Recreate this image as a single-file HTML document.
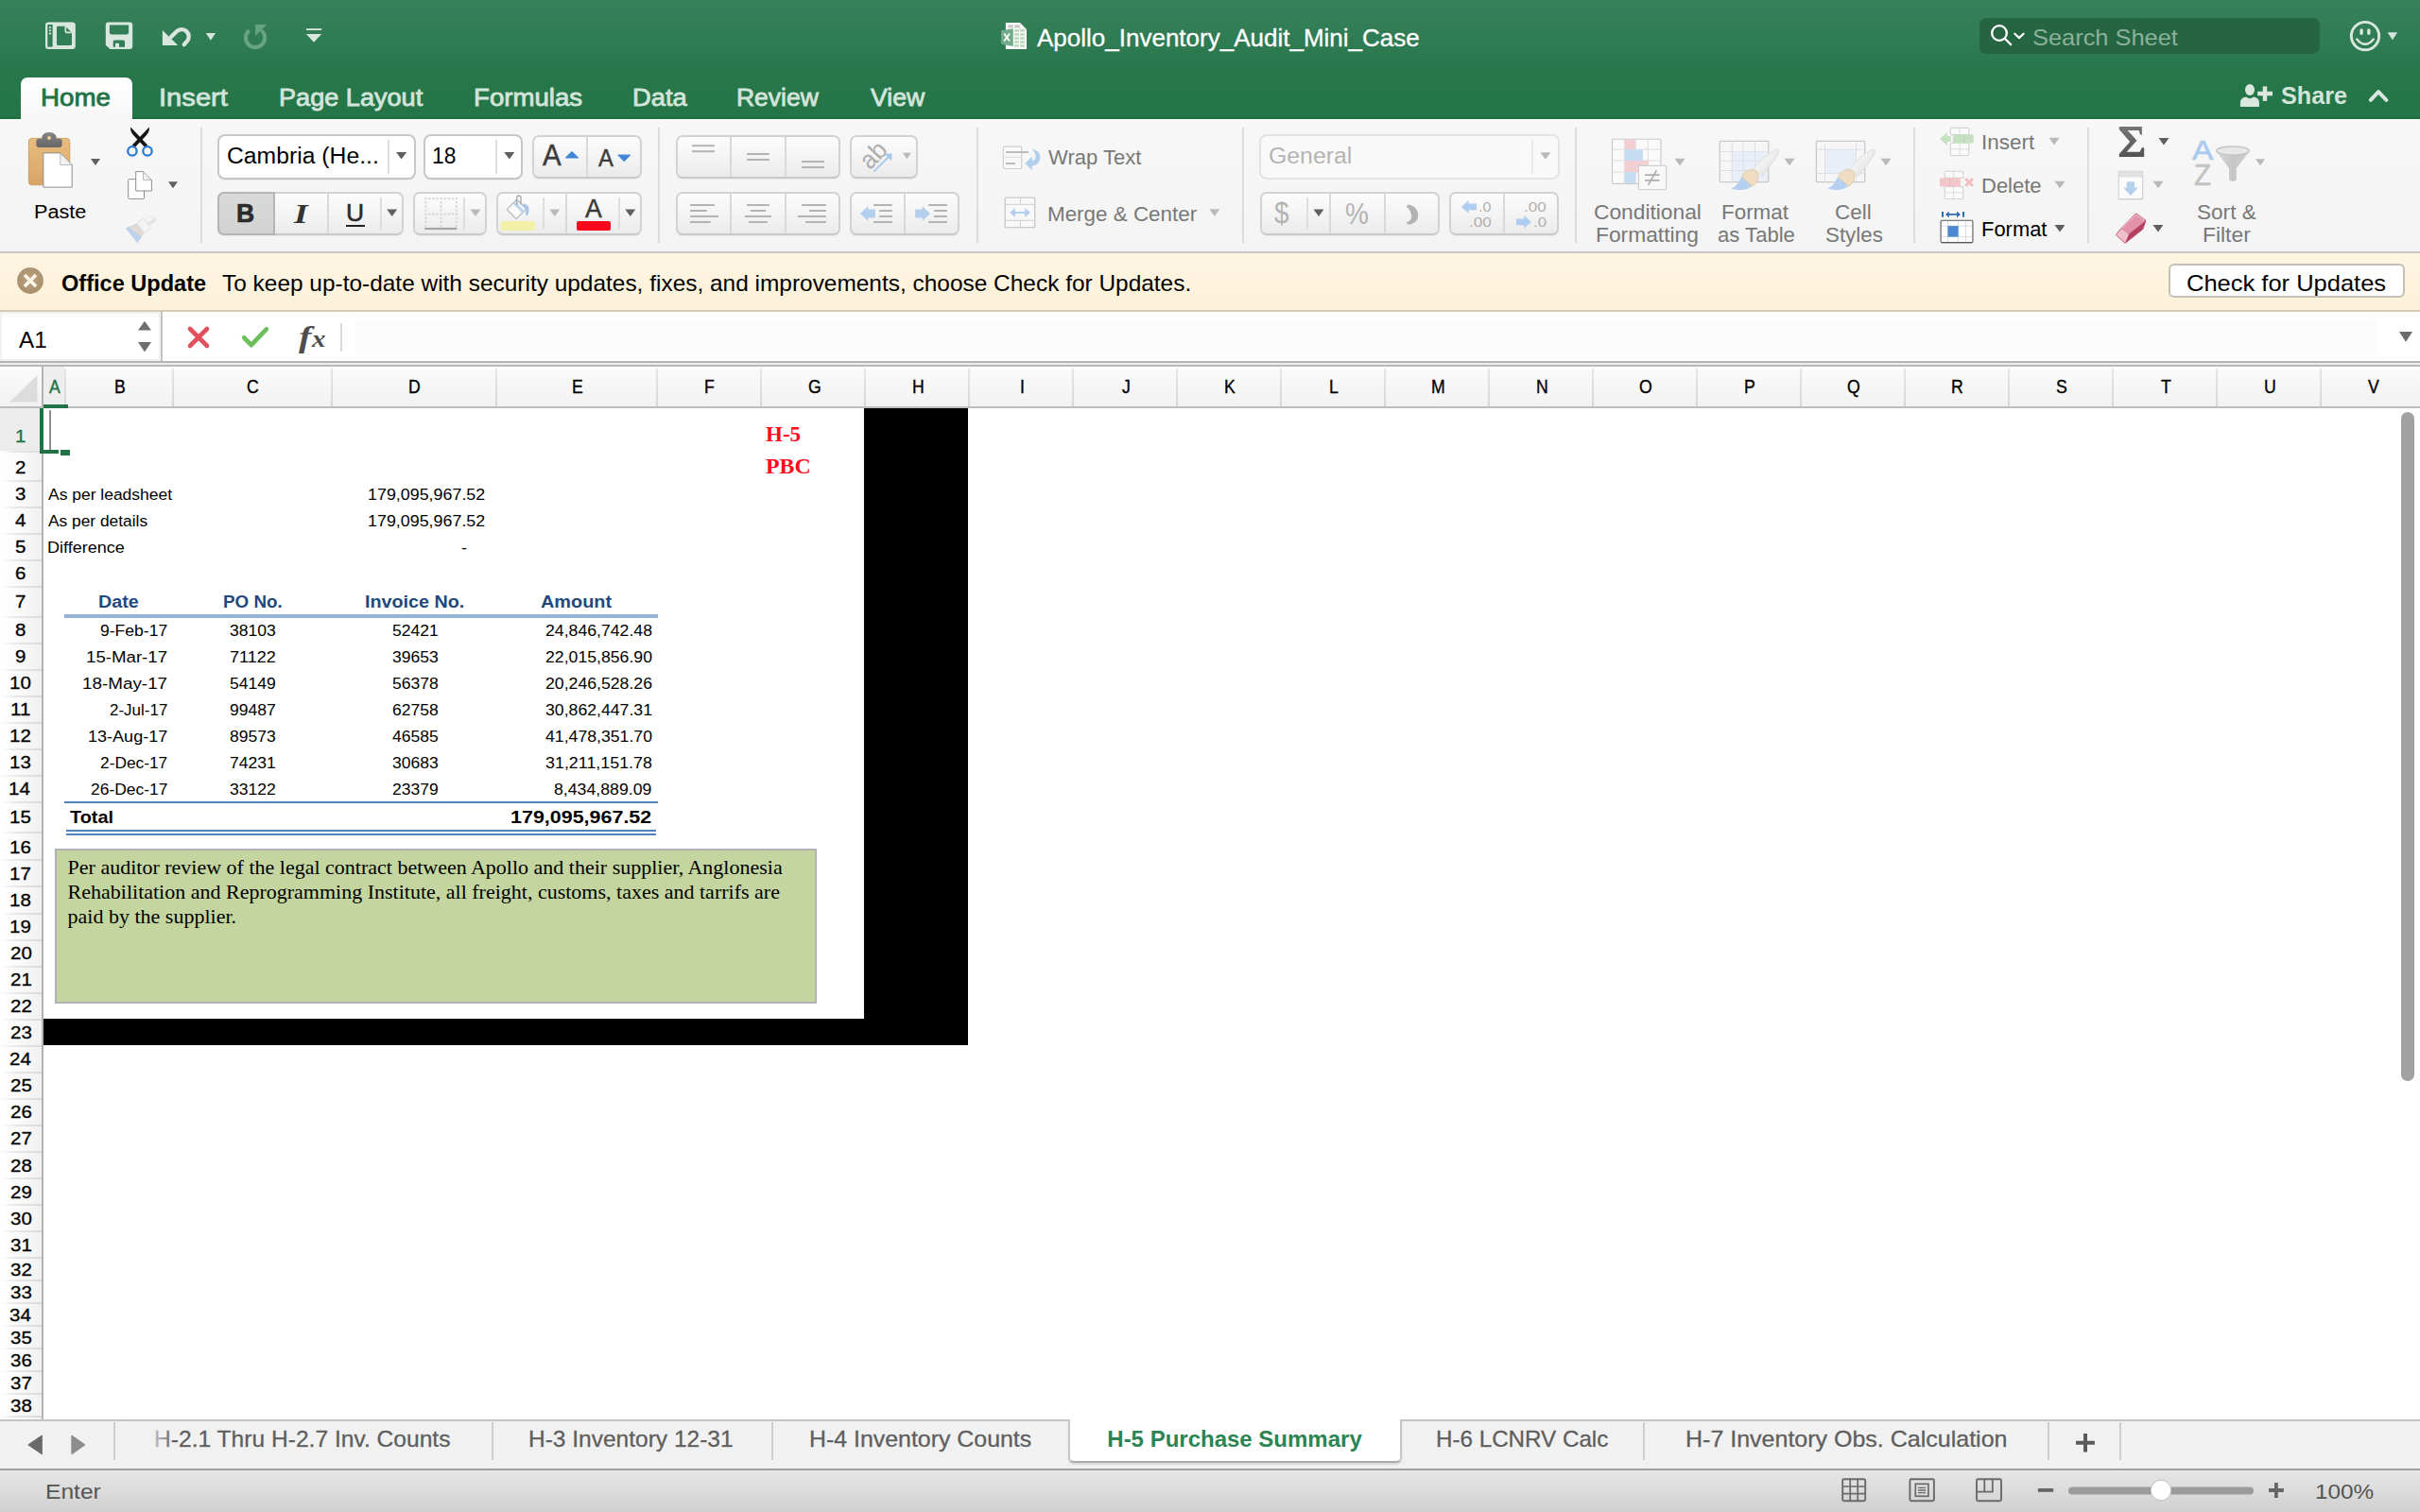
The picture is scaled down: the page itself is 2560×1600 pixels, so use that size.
<!DOCTYPE html>
<html><head><meta charset="utf-8"><title>Apollo_Inventory_Audit_Mini_Case</title>
<style>
html,body{margin:0;padding:0;width:2560px;height:1600px;overflow:hidden;background:#fff;font-family:"Liberation Sans",sans-serif;}
#app{position:relative;width:2560px;height:1600px;overflow:hidden;}
#app div{position:absolute;box-sizing:border-box;}
.t{position:absolute;white-space:pre;transform-origin:0 0;}
.ov{position:absolute;left:0;top:0;pointer-events:none;}
</style></head><body><div id="app">
<div style="left:0px;top:0px;width:2560px;height:126px;background:linear-gradient(#39815a 0px,#35805a 10px,#2f7b53 45px,#267649 85px,#237548 126px);"></div>
<div style="left:0px;top:124px;width:2560px;height:2px;background:linear-gradient(#217044,#1c6a3f);"></div>
<div style="left:22px;top:82px;width:118px;height:46px;background:linear-gradient(#ffffff,#f6f6f6);border-radius:7px 7px 0 0;"></div>
<div style="left:2094px;top:19px;width:360px;height:38px;background:#256542;border-radius:7px;"></div>
<div style="left:0px;top:126px;width:2560px;height:140px;background:linear-gradient(#f7f7f7,#f4f4f4);"></div>
<div style="left:0px;top:266px;width:2560px;height:2px;background:#c8c8c8;"></div>
<div style="left:22px;top:120px;width:118px;height:8px;background:#f6f6f6;"></div>
<div style="left:0px;top:268px;width:2560px;height:60px;background:linear-gradient(#fef5e1,#fcf1da);"></div>
<div style="left:0px;top:328px;width:2560px;height:2px;background:#d6ccb4;"></div>
<div style="left:0px;top:330px;width:2560px;height:52px;background:#fff;"></div>
<div style="left:376px;top:338px;width:2140px;height:38px;background:#fcfcfc;"></div>
<div style="left:0px;top:330px;width:170px;height:52px;background:#f1f1f1;"></div>
<div style="left:2px;top:332px;width:166px;height:48px;background:#fff;"></div>
<div style="left:170px;top:330px;width:2px;height:52px;background:#c2c2c2;"></div>
<div style="left:0px;top:382px;width:2560px;height:2px;background:#b4b4b4;"></div>
<div style="left:0px;top:384px;width:2560px;height:2px;background:#ececec;"></div>
<div style="left:0px;top:386px;width:2560px;height:2px;background:#b8b8b8;"></div>
<div style="left:0px;top:388px;width:2560px;height:42px;background:linear-gradient(#fbfbfb,#f2f2f2);"></div>
<div style="left:0px;top:430px;width:2560px;height:2px;background:#bcbcbc;"></div>
<div style="left:0px;top:432px;width:44px;height:1070px;background:linear-gradient(90deg,#ffffff 0%,#fbfbfb 40%,#f1f1f1 100%);"></div>
<div style="left:44px;top:388px;width:2px;height:1114px;background:#b3b3b3;"></div>
<div style="left:0px;top:1502px;width:2560px;height:2px;background:#c4c4c4;"></div>
<div style="left:0px;top:1504px;width:2560px;height:50px;background:#f1f1f1;"></div>
<div style="left:0px;top:1554px;width:2560px;height:2px;background:#a0a0a0;"></div>
<div style="left:0px;top:1556px;width:2560px;height:44px;background:linear-gradient(#e6e6e6,#d9d9d9 60%,#d0d0d0);"></div>
<div style="left:46px;top:388px;width:22px;height:42px;background:#eeeeee;"></div>
<div style="left:68px;top:390px;width:2px;height:40px;background:linear-gradient(#e6e6e6,#d6d6d6);"></div>
<div style="left:182px;top:390px;width:2px;height:40px;background:linear-gradient(#e6e6e6,#d6d6d6);"></div>
<div style="left:350px;top:390px;width:2px;height:40px;background:linear-gradient(#e6e6e6,#d6d6d6);"></div>
<div style="left:524px;top:390px;width:2px;height:40px;background:linear-gradient(#e6e6e6,#d6d6d6);"></div>
<div style="left:694px;top:390px;width:2px;height:40px;background:linear-gradient(#e6e6e6,#d6d6d6);"></div>
<div style="left:804px;top:390px;width:2px;height:40px;background:linear-gradient(#e6e6e6,#d6d6d6);"></div>
<div style="left:914px;top:390px;width:2px;height:40px;background:linear-gradient(#e6e6e6,#d6d6d6);"></div>
<div style="left:1024px;top:390px;width:2px;height:40px;background:linear-gradient(#e6e6e6,#d6d6d6);"></div>
<div style="left:1134px;top:390px;width:2px;height:40px;background:linear-gradient(#e6e6e6,#d6d6d6);"></div>
<div style="left:1244px;top:390px;width:2px;height:40px;background:linear-gradient(#e6e6e6,#d6d6d6);"></div>
<div style="left:1354px;top:390px;width:2px;height:40px;background:linear-gradient(#e6e6e6,#d6d6d6);"></div>
<div style="left:1464px;top:390px;width:2px;height:40px;background:linear-gradient(#e6e6e6,#d6d6d6);"></div>
<div style="left:1574px;top:390px;width:2px;height:40px;background:linear-gradient(#e6e6e6,#d6d6d6);"></div>
<div style="left:1684px;top:390px;width:2px;height:40px;background:linear-gradient(#e6e6e6,#d6d6d6);"></div>
<div style="left:1794px;top:390px;width:2px;height:40px;background:linear-gradient(#e6e6e6,#d6d6d6);"></div>
<div style="left:1904px;top:390px;width:2px;height:40px;background:linear-gradient(#e6e6e6,#d6d6d6);"></div>
<div style="left:2014px;top:390px;width:2px;height:40px;background:linear-gradient(#e6e6e6,#d6d6d6);"></div>
<div style="left:2124px;top:390px;width:2px;height:40px;background:linear-gradient(#e6e6e6,#d6d6d6);"></div>
<div style="left:2234px;top:390px;width:2px;height:40px;background:linear-gradient(#e6e6e6,#d6d6d6);"></div>
<div style="left:2344px;top:390px;width:2px;height:40px;background:linear-gradient(#e6e6e6,#d6d6d6);"></div>
<div style="left:2454px;top:390px;width:2px;height:40px;background:linear-gradient(#e6e6e6,#d6d6d6);"></div>
<span class="t" style="left:52.00px;top:397.21px;font:normal 400 19.6px/24px 'Liberation Sans';color:#217346;transform:scaleX(0.9000);-webkit-text-stroke:0.35px;">A</span>
<span class="t" style="left:120.90px;top:397.21px;font:normal 400 19.6px/24px 'Liberation Sans';color:#000;transform:scaleX(0.9000);-webkit-text-stroke:0.35px;">B</span>
<span class="t" style="left:261.45px;top:397.21px;font:normal 400 19.6px/24px 'Liberation Sans';color:#000;transform:scaleX(0.9000);-webkit-text-stroke:0.35px;">C</span>
<span class="t" style="left:432.45px;top:397.21px;font:normal 400 19.6px/24px 'Liberation Sans';color:#000;transform:scaleX(0.9000);-webkit-text-stroke:0.35px;">D</span>
<span class="t" style="left:604.90px;top:397.21px;font:normal 400 19.6px/24px 'Liberation Sans';color:#000;transform:scaleX(0.9000);-webkit-text-stroke:0.35px;">E</span>
<span class="t" style="left:745.35px;top:397.21px;font:normal 400 19.6px/24px 'Liberation Sans';color:#000;transform:scaleX(0.9000);-webkit-text-stroke:0.35px;">F</span>
<span class="t" style="left:854.90px;top:397.21px;font:normal 400 19.6px/24px 'Liberation Sans';color:#000;transform:scaleX(0.9000);-webkit-text-stroke:0.35px;">G</span>
<span class="t" style="left:964.90px;top:397.21px;font:normal 400 19.6px/24px 'Liberation Sans';color:#000;transform:scaleX(0.9000);-webkit-text-stroke:0.35px;">H</span>
<span class="t" style="left:1078.95px;top:397.21px;font:normal 400 19.6px/24px 'Liberation Sans';color:#000;transform:scaleX(0.9000);-webkit-text-stroke:0.35px;">I</span>
<span class="t" style="left:1187.15px;top:397.21px;font:normal 400 19.6px/24px 'Liberation Sans';color:#000;transform:scaleX(0.9000);-webkit-text-stroke:0.35px;">J</span>
<span class="t" style="left:1294.90px;top:397.21px;font:normal 400 19.6px/24px 'Liberation Sans';color:#000;transform:scaleX(0.9000);-webkit-text-stroke:0.35px;">K</span>
<span class="t" style="left:1405.80px;top:397.21px;font:normal 400 19.6px/24px 'Liberation Sans';color:#000;transform:scaleX(0.9000);-webkit-text-stroke:0.35px;">L</span>
<span class="t" style="left:1514.00px;top:397.21px;font:normal 400 19.6px/24px 'Liberation Sans';color:#000;transform:scaleX(0.9000);-webkit-text-stroke:0.35px;">M</span>
<span class="t" style="left:1624.90px;top:397.21px;font:normal 400 19.6px/24px 'Liberation Sans';color:#000;transform:scaleX(0.9000);-webkit-text-stroke:0.35px;">N</span>
<span class="t" style="left:1734.45px;top:397.21px;font:normal 400 19.6px/24px 'Liberation Sans';color:#000;transform:scaleX(0.9000);-webkit-text-stroke:0.35px;">O</span>
<span class="t" style="left:1844.90px;top:397.21px;font:normal 400 19.6px/24px 'Liberation Sans';color:#000;transform:scaleX(0.9000);-webkit-text-stroke:0.35px;">P</span>
<span class="t" style="left:1954.45px;top:397.21px;font:normal 400 19.6px/24px 'Liberation Sans';color:#000;transform:scaleX(0.9000);-webkit-text-stroke:0.35px;">Q</span>
<span class="t" style="left:2064.45px;top:397.21px;font:normal 400 19.6px/24px 'Liberation Sans';color:#000;transform:scaleX(0.9000);-webkit-text-stroke:0.35px;">R</span>
<span class="t" style="left:2175.35px;top:397.21px;font:normal 400 19.6px/24px 'Liberation Sans';color:#000;transform:scaleX(0.9000);-webkit-text-stroke:0.35px;">S</span>
<span class="t" style="left:2285.80px;top:397.21px;font:normal 400 19.6px/24px 'Liberation Sans';color:#000;transform:scaleX(0.9000);-webkit-text-stroke:0.35px;">T</span>
<span class="t" style="left:2394.90px;top:397.21px;font:normal 400 19.6px/24px 'Liberation Sans';color:#000;transform:scaleX(0.9000);-webkit-text-stroke:0.35px;">U</span>
<span class="t" style="left:2505.35px;top:397.21px;font:normal 400 19.6px/24px 'Liberation Sans';color:#000;transform:scaleX(0.9000);-webkit-text-stroke:0.35px;">V</span>
<div style="left:0px;top:432px;width:44px;height:45px;background:#ececec;"></div>
<div style="left:0px;top:477px;width:44px;height:2px;background:linear-gradient(90deg,#ffffff 0%,#e9e9e9 35%,#dadada 100%);"></div>
<div style="left:0px;top:508px;width:44px;height:2px;background:linear-gradient(90deg,#ffffff 0%,#e9e9e9 35%,#dadada 100%);"></div>
<div style="left:0px;top:536px;width:44px;height:2px;background:linear-gradient(90deg,#ffffff 0%,#e9e9e9 35%,#dadada 100%);"></div>
<div style="left:0px;top:564px;width:44px;height:2px;background:linear-gradient(90deg,#ffffff 0%,#e9e9e9 35%,#dadada 100%);"></div>
<div style="left:0px;top:592px;width:44px;height:2px;background:linear-gradient(90deg,#ffffff 0%,#e9e9e9 35%,#dadada 100%);"></div>
<div style="left:0px;top:620px;width:44px;height:2px;background:linear-gradient(90deg,#ffffff 0%,#e9e9e9 35%,#dadada 100%);"></div>
<div style="left:0px;top:652px;width:44px;height:2px;background:linear-gradient(90deg,#ffffff 0%,#e9e9e9 35%,#dadada 100%);"></div>
<div style="left:0px;top:680px;width:44px;height:2px;background:linear-gradient(90deg,#ffffff 0%,#e9e9e9 35%,#dadada 100%);"></div>
<div style="left:0px;top:708px;width:44px;height:2px;background:linear-gradient(90deg,#ffffff 0%,#e9e9e9 35%,#dadada 100%);"></div>
<div style="left:0px;top:736px;width:44px;height:2px;background:linear-gradient(90deg,#ffffff 0%,#e9e9e9 35%,#dadada 100%);"></div>
<div style="left:0px;top:764px;width:44px;height:2px;background:linear-gradient(90deg,#ffffff 0%,#e9e9e9 35%,#dadada 100%);"></div>
<div style="left:0px;top:792px;width:44px;height:2px;background:linear-gradient(90deg,#ffffff 0%,#e9e9e9 35%,#dadada 100%);"></div>
<div style="left:0px;top:820px;width:44px;height:2px;background:linear-gradient(90deg,#ffffff 0%,#e9e9e9 35%,#dadada 100%);"></div>
<div style="left:0px;top:848px;width:44px;height:2px;background:linear-gradient(90deg,#ffffff 0%,#e9e9e9 35%,#dadada 100%);"></div>
<div style="left:0px;top:880px;width:44px;height:2px;background:linear-gradient(90deg,#ffffff 0%,#e9e9e9 35%,#dadada 100%);"></div>
<div style="left:0px;top:909px;width:44px;height:2px;background:linear-gradient(90deg,#ffffff 0%,#e9e9e9 35%,#dadada 100%);"></div>
<div style="left:0px;top:937px;width:44px;height:2px;background:linear-gradient(90deg,#ffffff 0%,#e9e9e9 35%,#dadada 100%);"></div>
<div style="left:0px;top:966px;width:44px;height:2px;background:linear-gradient(90deg,#ffffff 0%,#e9e9e9 35%,#dadada 100%);"></div>
<div style="left:0px;top:994px;width:44px;height:2px;background:linear-gradient(90deg,#ffffff 0%,#e9e9e9 35%,#dadada 100%);"></div>
<div style="left:0px;top:1022px;width:44px;height:2px;background:linear-gradient(90deg,#ffffff 0%,#e9e9e9 35%,#dadada 100%);"></div>
<div style="left:0px;top:1050px;width:44px;height:2px;background:linear-gradient(90deg,#ffffff 0%,#e9e9e9 35%,#dadada 100%);"></div>
<div style="left:0px;top:1078px;width:44px;height:2px;background:linear-gradient(90deg,#ffffff 0%,#e9e9e9 35%,#dadada 100%);"></div>
<div style="left:0px;top:1106px;width:44px;height:2px;background:linear-gradient(90deg,#ffffff 0%,#e9e9e9 35%,#dadada 100%);"></div>
<div style="left:0px;top:1134px;width:44px;height:2px;background:linear-gradient(90deg,#ffffff 0%,#e9e9e9 35%,#dadada 100%);"></div>
<div style="left:0px;top:1162px;width:44px;height:2px;background:linear-gradient(90deg,#ffffff 0%,#e9e9e9 35%,#dadada 100%);"></div>
<div style="left:0px;top:1190px;width:44px;height:2px;background:linear-gradient(90deg,#ffffff 0%,#e9e9e9 35%,#dadada 100%);"></div>
<div style="left:0px;top:1218px;width:44px;height:2px;background:linear-gradient(90deg,#ffffff 0%,#e9e9e9 35%,#dadada 100%);"></div>
<div style="left:0px;top:1246px;width:44px;height:2px;background:linear-gradient(90deg,#ffffff 0%,#e9e9e9 35%,#dadada 100%);"></div>
<div style="left:0px;top:1274px;width:44px;height:2px;background:linear-gradient(90deg,#ffffff 0%,#e9e9e9 35%,#dadada 100%);"></div>
<div style="left:0px;top:1302px;width:44px;height:2px;background:linear-gradient(90deg,#ffffff 0%,#e9e9e9 35%,#dadada 100%);"></div>
<div style="left:0px;top:1330px;width:44px;height:2px;background:linear-gradient(90deg,#ffffff 0%,#e9e9e9 35%,#dadada 100%);"></div>
<div style="left:0px;top:1354px;width:44px;height:2px;background:linear-gradient(90deg,#ffffff 0%,#e9e9e9 35%,#dadada 100%);"></div>
<div style="left:0px;top:1378px;width:44px;height:2px;background:linear-gradient(90deg,#ffffff 0%,#e9e9e9 35%,#dadada 100%);"></div>
<div style="left:0px;top:1402px;width:44px;height:2px;background:linear-gradient(90deg,#ffffff 0%,#e9e9e9 35%,#dadada 100%);"></div>
<div style="left:0px;top:1426px;width:44px;height:2px;background:linear-gradient(90deg,#ffffff 0%,#e9e9e9 35%,#dadada 100%);"></div>
<div style="left:0px;top:1450px;width:44px;height:2px;background:linear-gradient(90deg,#ffffff 0%,#e9e9e9 35%,#dadada 100%);"></div>
<div style="left:0px;top:1474px;width:44px;height:2px;background:linear-gradient(90deg,#ffffff 0%,#e9e9e9 35%,#dadada 100%);"></div>
<div style="left:0px;top:1498px;width:44px;height:2px;background:linear-gradient(90deg,#ffffff 0%,#e9e9e9 35%,#dadada 100%);"></div>
<span class="t" style="left:15.71px;top:449.55px;font:normal 400 19.2px/23px 'Liberation Sans';color:#217346;transform:scaleX(1.0700);-webkit-text-stroke:0.3px;">1</span>
<span class="t" style="left:16.25px;top:483.25px;font:normal 400 19.2px/23px 'Liberation Sans';color:#000;transform:scaleX(1.0700);-webkit-text-stroke:0.3px;">2</span>
<span class="t" style="left:16.25px;top:511.25px;font:normal 400 19.2px/23px 'Liberation Sans';color:#000;transform:scaleX(1.0700);-webkit-text-stroke:0.3px;">3</span>
<span class="t" style="left:15.71px;top:539.25px;font:normal 400 19.2px/23px 'Liberation Sans';color:#000;transform:scaleX(1.0700);-webkit-text-stroke:0.3px;">4</span>
<span class="t" style="left:16.25px;top:567.25px;font:normal 400 19.2px/23px 'Liberation Sans';color:#000;transform:scaleX(1.0700);-webkit-text-stroke:0.3px;">5</span>
<span class="t" style="left:16.25px;top:595.25px;font:normal 400 19.2px/23px 'Liberation Sans';color:#000;transform:scaleX(1.0700);-webkit-text-stroke:0.3px;">6</span>
<span class="t" style="left:16.25px;top:625.05px;font:normal 400 19.2px/23px 'Liberation Sans';color:#000;transform:scaleX(1.0700);-webkit-text-stroke:0.3px;">7</span>
<span class="t" style="left:16.25px;top:655.25px;font:normal 400 19.2px/23px 'Liberation Sans';color:#000;transform:scaleX(1.0700);-webkit-text-stroke:0.3px;">8</span>
<span class="t" style="left:16.25px;top:683.25px;font:normal 400 19.2px/23px 'Liberation Sans';color:#000;transform:scaleX(1.0700);-webkit-text-stroke:0.3px;">9</span>
<span class="t" style="left:10.01px;top:711.25px;font:normal 400 19.2px/23px 'Liberation Sans';color:#000;transform:scaleX(1.0700);-webkit-text-stroke:0.3px;">10</span>
<span class="t" style="left:10.77px;top:739.25px;font:normal 400 19.2px/23px 'Liberation Sans';color:#000;transform:scaleX(1.0700);-webkit-text-stroke:0.3px;">11</span>
<span class="t" style="left:10.01px;top:767.25px;font:normal 400 19.2px/23px 'Liberation Sans';color:#000;transform:scaleX(1.0700);-webkit-text-stroke:0.3px;">12</span>
<span class="t" style="left:10.01px;top:795.25px;font:normal 400 19.2px/23px 'Liberation Sans';color:#000;transform:scaleX(1.0700);-webkit-text-stroke:0.3px;">13</span>
<span class="t" style="left:9.47px;top:823.25px;font:normal 400 19.2px/23px 'Liberation Sans';color:#000;transform:scaleX(1.0700);-webkit-text-stroke:0.3px;">14</span>
<span class="t" style="left:10.01px;top:853.45px;font:normal 400 19.2px/23px 'Liberation Sans';color:#000;transform:scaleX(1.0700);-webkit-text-stroke:0.3px;">15</span>
<span class="t" style="left:10.01px;top:885.25px;font:normal 400 19.2px/23px 'Liberation Sans';color:#000;transform:scaleX(1.0700);-webkit-text-stroke:0.3px;">16</span>
<span class="t" style="left:10.01px;top:912.95px;font:normal 400 19.2px/23px 'Liberation Sans';color:#000;transform:scaleX(1.0700);-webkit-text-stroke:0.3px;">17</span>
<span class="t" style="left:10.01px;top:941.05px;font:normal 400 19.2px/23px 'Liberation Sans';color:#000;transform:scaleX(1.0700);-webkit-text-stroke:0.3px;">18</span>
<span class="t" style="left:10.01px;top:969.15px;font:normal 400 19.2px/23px 'Liberation Sans';color:#000;transform:scaleX(1.0700);-webkit-text-stroke:0.3px;">19</span>
<span class="t" style="left:10.54px;top:997.25px;font:normal 400 19.2px/23px 'Liberation Sans';color:#000;transform:scaleX(1.0700);-webkit-text-stroke:0.3px;">20</span>
<span class="t" style="left:10.54px;top:1025.45px;font:normal 400 19.2px/23px 'Liberation Sans';color:#000;transform:scaleX(1.0700);-webkit-text-stroke:0.3px;">21</span>
<span class="t" style="left:10.54px;top:1053.05px;font:normal 400 19.2px/23px 'Liberation Sans';color:#000;transform:scaleX(1.0700);-webkit-text-stroke:0.3px;">22</span>
<span class="t" style="left:10.54px;top:1081.05px;font:normal 400 19.2px/23px 'Liberation Sans';color:#000;transform:scaleX(1.0700);-webkit-text-stroke:0.3px;">23</span>
<span class="t" style="left:10.01px;top:1109.15px;font:normal 400 19.2px/23px 'Liberation Sans';color:#000;transform:scaleX(1.0700);-webkit-text-stroke:0.3px;">24</span>
<span class="t" style="left:10.54px;top:1137.25px;font:normal 400 19.2px/23px 'Liberation Sans';color:#000;transform:scaleX(1.0700);-webkit-text-stroke:0.3px;">25</span>
<span class="t" style="left:10.54px;top:1165.35px;font:normal 400 19.2px/23px 'Liberation Sans';color:#000;transform:scaleX(1.0700);-webkit-text-stroke:0.3px;">26</span>
<span class="t" style="left:10.54px;top:1193.45px;font:normal 400 19.2px/23px 'Liberation Sans';color:#000;transform:scaleX(1.0700);-webkit-text-stroke:0.3px;">27</span>
<span class="t" style="left:10.54px;top:1221.55px;font:normal 400 19.2px/23px 'Liberation Sans';color:#000;transform:scaleX(1.0700);-webkit-text-stroke:0.3px;">28</span>
<span class="t" style="left:10.54px;top:1249.65px;font:normal 400 19.2px/23px 'Liberation Sans';color:#000;transform:scaleX(1.0700);-webkit-text-stroke:0.3px;">29</span>
<span class="t" style="left:10.54px;top:1277.75px;font:normal 400 19.2px/23px 'Liberation Sans';color:#000;transform:scaleX(1.0700);-webkit-text-stroke:0.3px;">30</span>
<span class="t" style="left:10.54px;top:1305.85px;font:normal 400 19.2px/23px 'Liberation Sans';color:#000;transform:scaleX(1.0700);-webkit-text-stroke:0.3px;">31</span>
<span class="t" style="left:10.54px;top:1331.55px;font:normal 400 19.2px/23px 'Liberation Sans';color:#000;transform:scaleX(1.0700);-webkit-text-stroke:0.3px;">32</span>
<span class="t" style="left:10.54px;top:1355.55px;font:normal 400 19.2px/23px 'Liberation Sans';color:#000;transform:scaleX(1.0700);-webkit-text-stroke:0.3px;">33</span>
<span class="t" style="left:10.01px;top:1379.55px;font:normal 400 19.2px/23px 'Liberation Sans';color:#000;transform:scaleX(1.0700);-webkit-text-stroke:0.3px;">34</span>
<span class="t" style="left:10.54px;top:1403.55px;font:normal 400 19.2px/23px 'Liberation Sans';color:#000;transform:scaleX(1.0700);-webkit-text-stroke:0.3px;">35</span>
<span class="t" style="left:10.54px;top:1427.55px;font:normal 400 19.2px/23px 'Liberation Sans';color:#000;transform:scaleX(1.0700);-webkit-text-stroke:0.3px;">36</span>
<span class="t" style="left:10.54px;top:1451.55px;font:normal 400 19.2px/23px 'Liberation Sans';color:#000;transform:scaleX(1.0700);-webkit-text-stroke:0.3px;">37</span>
<span class="t" style="left:10.54px;top:1475.55px;font:normal 400 19.2px/23px 'Liberation Sans';color:#000;transform:scaleX(1.0700);-webkit-text-stroke:0.3px;">38</span>
<div style="left:914px;top:432px;width:110px;height:674px;background:#000;"></div>
<div style="left:46px;top:1078px;width:978px;height:28px;background:#000;"></div>
<div style="left:46px;top:428px;width:26px;height:4px;background:#217346;"></div>
<div style="left:42px;top:432px;width:4px;height:48px;background:#217346;"></div>
<div style="left:42px;top:476px;width:20px;height:4px;background:#217346;"></div>
<div style="left:64px;top:476px;width:10px;height:6px;background:#217346;"></div>
<div style="left:52px;top:434px;width:2px;height:42px;background:#8e8e8e;"></div>
<div style="left:68px;top:650px;width:628px;height:4px;background:#95b3d7;"></div>
<div style="left:68px;top:848px;width:628px;height:2px;background:#4f81bd;"></div>
<div style="left:70px;top:878px;width:624px;height:2px;background:#4f81bd;"></div>
<div style="left:70px;top:882px;width:624px;height:2px;background:#4f81bd;"></div>
<div style="left:58px;top:898px;width:806px;height:164px;background:#c4d59f;border:2px solid #b2b2b2;"></div>
<div style="left:2540px;top:436px;width:14px;height:708px;background:#a1a1a1;border-radius:7px;"></div>
<div style="left:212px;top:135px;width:2px;height:122px;background:#dddddd;"></div>
<div style="left:696px;top:135px;width:2px;height:122px;background:#dddddd;"></div>
<div style="left:1033px;top:135px;width:2px;height:122px;background:#dddddd;"></div>
<div style="left:1314px;top:135px;width:2px;height:122px;background:#dddddd;"></div>
<div style="left:1666px;top:135px;width:2px;height:122px;background:#dddddd;"></div>
<div style="left:2024px;top:135px;width:2px;height:122px;background:#dddddd;"></div>
<div style="left:2208px;top:135px;width:2px;height:122px;background:#dddddd;"></div>
<div style="left:230px;top:142px;width:209.5px;height:47.5px;background:#fff;border:2px solid #c7c7c7;border-radius:8px;box-shadow:0 1px 0 rgba(0,0,0,0.05);"></div>
<div style="left:409.7px;top:148px;width:2px;height:35.5px;background:#dedede;"></div>
<div style="left:448.3px;top:142px;width:105.2px;height:47.5px;background:#fff;border:2px solid #c7c7c7;border-radius:8px;box-shadow:0 1px 0 rgba(0,0,0,0.05);"></div>
<div style="left:524px;top:148px;width:2px;height:35.5px;background:#dedede;"></div>
<div style="left:563px;top:143.2px;width:115.7px;height:46.0px;background:linear-gradient(#fcfcfc,#f3f3f3 55%,#ebebeb);border:2px solid #d2d2d2;border-bottom-color:#c9c9c9;border-radius:7px;box-shadow:0 1px 1px rgba(0,0,0,0.05);"></div>
<div style="left:619.5px;top:145.2px;width:2px;height:42.0px;background:#d9d9d9;"></div>
<div style="left:714.8px;top:143.2px;width:174.0px;height:46.0px;background:linear-gradient(#fcfcfc,#f3f3f3 55%,#ebebeb);border:2px solid #d2d2d2;border-bottom-color:#c9c9c9;border-radius:7px;box-shadow:0 1px 1px rgba(0,0,0,0.05);"></div>
<div style="left:772px;top:145.2px;width:2px;height:42.0px;background:#d9d9d9;"></div>
<div style="left:829.5px;top:145.2px;width:2px;height:42.0px;background:#d9d9d9;"></div>
<div style="left:899.2px;top:143.2px;width:71.7px;height:46.0px;background:linear-gradient(#fcfcfc,#f3f3f3 55%,#ebebeb);border:2px solid #d2d2d2;border-bottom-color:#c9c9c9;border-radius:7px;box-shadow:0 1px 1px rgba(0,0,0,0.05);"></div>
<div style="left:1332.3px;top:142px;width:317.5px;height:47.5px;background:#f9f9f9;border:2px solid #e3e3e3;border-radius:8px;"></div>
<div style="left:1620px;top:148px;width:2px;height:35.5px;background:#e9e9e9;"></div>
<div style="left:230px;top:203.3px;width:196.6px;height:45.7px;background:linear-gradient(#fcfcfc,#f3f3f3 55%,#ebebeb);border:2px solid #d2d2d2;border-bottom-color:#c9c9c9;border-radius:7px;box-shadow:0 1px 1px rgba(0,0,0,0.05);"></div>
<div style="left:346.2px;top:205.3px;width:2px;height:41.69999999999999px;background:#d9d9d9;"></div>
<div style="left:401.8px;top:209.3px;width:2px;height:33.69999999999999px;background:#dedede;"></div>
<div style="left:230px;top:203.3px;width:60.5px;height:45.7px;background:linear-gradient(#d9d9d9,#d2d2d2);border:2px solid #b5b5b5;border-radius:7px 0 0 7px;"></div>
<div style="left:436.5px;top:203.3px;width:78.5px;height:45.7px;background:linear-gradient(#fcfcfc,#f3f3f3 55%,#ebebeb);border:2px solid #d2d2d2;border-bottom-color:#c9c9c9;border-radius:7px;box-shadow:0 1px 1px rgba(0,0,0,0.05);"></div>
<div style="left:490px;top:209.3px;width:2px;height:33.69999999999999px;background:#dedede;"></div>
<div style="left:525px;top:203.3px;width:153.7px;height:45.7px;background:linear-gradient(#fcfcfc,#f3f3f3 55%,#ebebeb);border:2px solid #d2d2d2;border-bottom-color:#c9c9c9;border-radius:7px;box-shadow:0 1px 1px rgba(0,0,0,0.05);"></div>
<div style="left:597.7px;top:205.3px;width:2px;height:41.69999999999999px;background:#d9d9d9;"></div>
<div style="left:574px;top:209.3px;width:2px;height:33.69999999999999px;background:#dedede;"></div>
<div style="left:653.9px;top:209.3px;width:2px;height:33.69999999999999px;background:#dedede;"></div>
<div style="left:714.8px;top:203.3px;width:174.0px;height:45.7px;background:linear-gradient(#fcfcfc,#f3f3f3 55%,#ebebeb);border:2px solid #d2d2d2;border-bottom-color:#c9c9c9;border-radius:7px;box-shadow:0 1px 1px rgba(0,0,0,0.05);"></div>
<div style="left:772px;top:205.3px;width:2px;height:41.69999999999999px;background:#d9d9d9;"></div>
<div style="left:829.5px;top:205.3px;width:2px;height:41.69999999999999px;background:#d9d9d9;"></div>
<div style="left:899.2px;top:203.3px;width:115.8px;height:45.7px;background:linear-gradient(#fcfcfc,#f3f3f3 55%,#ebebeb);border:2px solid #d2d2d2;border-bottom-color:#c9c9c9;border-radius:7px;box-shadow:0 1px 1px rgba(0,0,0,0.05);"></div>
<div style="left:955.8px;top:205.3px;width:2px;height:41.69999999999999px;background:#d9d9d9;"></div>
<div style="left:1333px;top:203.3px;width:189.8px;height:45.7px;background:linear-gradient(#fcfcfc,#f3f3f3 55%,#ebebeb);border:2px solid #d2d2d2;border-bottom-color:#c9c9c9;border-radius:7px;box-shadow:0 1px 1px rgba(0,0,0,0.05);"></div>
<div style="left:1405.7px;top:205.3px;width:2px;height:41.69999999999999px;background:#d9d9d9;"></div>
<div style="left:1463.8px;top:205.3px;width:2px;height:41.69999999999999px;background:#d9d9d9;"></div>
<div style="left:1382px;top:209.3px;width:2px;height:33.69999999999999px;background:#dedede;"></div>
<div style="left:1532.7px;top:203.3px;width:116.3px;height:45.7px;background:linear-gradient(#fcfcfc,#f3f3f3 55%,#ebebeb);border:2px solid #d2d2d2;border-bottom-color:#c9c9c9;border-radius:7px;box-shadow:0 1px 1px rgba(0,0,0,0.05);"></div>
<div style="left:1589.8px;top:205.3px;width:2px;height:41.69999999999999px;background:#d9d9d9;"></div>
<span class="t" style="left:249.90px;top:209.10px;font:normal 700 28px/34px 'Liberation Sans';color:#2b2b2b;transform:scaleX(0.9500);-webkit-text-stroke:0.7px;">B</span>
<span class="t" style="left:310.50px;top:207.68px;font:italic 700 30px/36px 'Liberation Serif';color:#333;transform:scaleX(1.2500);">I</span>
<span class="t" style="left:366.46px;top:210.04px;font:normal 400 25px/30px 'Liberation Sans';color:#2a2a2a;transform:scaleX(1.0600);-webkit-text-stroke:0.5px;">U</span>
<div style="left:366px;top:238px;width:20px;height:2.4px;background:#222;"></div>
<span class="t" style="left:574.02px;top:146.26px;font:normal 400 31px/37px 'Liberation Sans';color:#3c3c3c;transform:scaleX(0.9500);-webkit-text-stroke:0.5px;">A</span>
<span class="t" style="left:633.42px;top:151.84px;font:normal 400 25px/30px 'Liberation Sans';color:#3c3c3c;transform:scaleX(0.9500);-webkit-text-stroke:0.4px;">A</span>
<span class="t" style="left:618.98px;top:203.60px;font:normal 400 28px/34px 'Liberation Sans';color:#3a3a3a;transform:scaleX(0.9500);-webkit-text-stroke:0.5px;">A</span>
<div style="left:610px;top:234px;width:36px;height:9.6px;background:#f7081c;border-radius:2px;"></div>
<div style="left:530px;top:234px;width:36px;height:9.6px;background:#f3f0a8;border-radius:2px;"></div>
<span class="t" style="left:1348.05px;top:207.36px;font:normal 400 31px/37px 'Liberation Sans';color:#b3b3b3;transform:scaleX(0.9000);">$</span>
<span class="t" style="left:1423.40px;top:207.96px;font:normal 400 31px/37px 'Liberation Sans';color:#b3b3b3;transform:scaleX(0.9000);">%</span>
<span class="t" style="left:1564.16px;top:208.83px;font:normal 400 15.5px/19px 'Liberation Sans';color:#b1b1b1;transform:scaleX(1.0401);">.0</span>
<span class="t" style="left:1553.69px;top:224.73px;font:normal 400 15.5px/19px 'Liberation Sans';color:#b1b1b1;transform:scaleX(1.1086);">.00</span>
<span class="t" style="left:1612.10px;top:208.83px;font:normal 400 15.5px/19px 'Liberation Sans';color:#b1b1b1;transform:scaleX(1.0991);">.00</span>
<span class="t" style="left:1621.82px;top:224.73px;font:normal 400 15.5px/19px 'Liberation Sans';color:#b1b1b1;transform:scaleX(1.0807);">.0</span>
<span class="t" style="left:2318.90px;top:141.30px;font:normal 400 30px/36px 'Liberation Sans';color:#a9c9ee;transform:scaleX(1.1100);-webkit-text-stroke:0.6px #a9c9ee;">A</span>
<span class="t" style="left:2321.20px;top:167.00px;font:normal 400 30.6px/37px 'Liberation Sans';color:#c2c2c2;transform:scaleX(0.9667);-webkit-text-stroke:0.5px #c2c2c2;">Z</span>
<span class="t" style="left:315.50px;top:337.84px;font:italic 700 31px/37px 'Liberation Serif';color:#4d4d4d;transform:scaleX(1.3077);">f</span>
<span class="t" style="left:329.61px;top:342.53px;font:italic 700 26px/31px 'Liberation Serif';color:#4d4d4d;transform:scaleX(1.1071);">x</span>
<div style="left:360px;top:342px;width:2px;height:30px;background:#dadada;"></div>
<span class="t" style="left:1096.50px;top:24.79px;font:normal 400 25.7px/31px 'Liberation Sans';color:#fff;transform:scaleX(1.0124);-webkit-text-stroke:0.3px;">Apollo_Inventory_Audit_Mini_Case</span>
<span class="t" style="left:2149.94px;top:25.18px;font:normal 400 24px/29px 'Liberation Sans';color:#8bb19b;transform:scaleX(1.0583);">Search Sheet</span>
<span class="t" style="left:42.91px;top:86.82px;font:normal 400 26.5px/32px 'Liberation Sans';color:#217346;transform:scaleX(1.0449);-webkit-text-stroke:0.85px;">Home</span>
<span class="t" style="left:168.40px;top:86.82px;font:normal 400 26.5px/32px 'Liberation Sans';color:#d3e4da;transform:scaleX(1.0999);-webkit-text-stroke:0.85px;">Insert</span>
<span class="t" style="left:294.55px;top:86.82px;font:normal 400 26.5px/32px 'Liberation Sans';color:#d3e4da;transform:scaleX(1.0227);-webkit-text-stroke:0.85px;">Page Layout</span>
<span class="t" style="left:500.91px;top:86.82px;font:normal 400 26.5px/32px 'Liberation Sans';color:#d3e4da;transform:scaleX(1.0426);-webkit-text-stroke:0.85px;">Formulas</span>
<span class="t" style="left:668.64px;top:86.82px;font:normal 400 26.5px/32px 'Liberation Sans';color:#d3e4da;transform:scaleX(1.0325);-webkit-text-stroke:0.85px;">Data</span>
<span class="t" style="left:778.90px;top:86.82px;font:normal 400 26.5px/32px 'Liberation Sans';color:#d3e4da;-webkit-text-stroke:0.85px;">Review</span>
<span class="t" style="left:920.70px;top:86.82px;font:normal 400 26.5px/32px 'Liberation Sans';color:#d3e4da;transform:scaleX(1.0048);-webkit-text-stroke:0.85px;">View</span>
<span class="t" style="left:2413.00px;top:86.34px;font:normal 700 25px/30px 'Liberation Sans';color:#d3e4da;transform:scaleX(1.0061);">Share</span>
<span class="t" style="left:35.62px;top:212.27px;font:normal 400 20px/24px 'Liberation Sans';color:#000;transform:scaleX(1.0836);">Paste</span>
<span class="t" style="left:239.65px;top:151.46px;font:normal 400 23.5px/28px 'Liberation Sans';color:#000;transform:scaleX(1.0522);">Cambria (He...</span>
<span class="t" style="left:457.33px;top:151.46px;font:normal 400 23.5px/28px 'Liberation Sans';color:#000;transform:scaleX(0.9733);">18</span>
<span class="t" style="left:1109.00px;top:154.15px;font:normal 400 21.2px/25px 'Liberation Sans';color:#787878;transform:scaleX(1.0390);">Wrap Text</span>
<span class="t" style="left:1107.94px;top:214.15px;font:normal 400 21.2px/25px 'Liberation Sans';color:#787878;transform:scaleX(1.0573);">Merge &amp; Center</span>
<span class="t" style="left:1341.74px;top:151.46px;font:normal 400 23.5px/28px 'Liberation Sans';color:#b4b4b4;transform:scaleX(1.0555);">General</span>
<span class="t" style="left:1685.63px;top:211.85px;font:normal 400 21.2px/25px 'Liberation Sans';color:#787878;transform:scaleX(1.0738);">Conditional</span>
<span class="t" style="left:1687.92px;top:235.85px;font:normal 400 21.2px/25px 'Liberation Sans';color:#787878;transform:scaleX(1.0756);">Formatting</span>
<span class="t" style="left:1820.94px;top:211.85px;font:normal 400 21.2px/25px 'Liberation Sans';color:#787878;transform:scaleX(1.0572);">Format</span>
<span class="t" style="left:1816.50px;top:235.85px;font:normal 400 21.2px/25px 'Liberation Sans';color:#787878;transform:scaleX(1.0431);">as Table</span>
<span class="t" style="left:1940.94px;top:211.85px;font:normal 400 21.2px/25px 'Liberation Sans';color:#787878;transform:scaleX(1.0577);">Cell</span>
<span class="t" style="left:1930.60px;top:235.85px;font:normal 400 21.2px/25px 'Liberation Sans';color:#787878;transform:scaleX(1.0542);">Styles</span>
<span class="t" style="left:2096.24px;top:137.95px;font:normal 400 21.2px/25px 'Liberation Sans';color:#787878;transform:scaleX(1.0594);">Insert</span>
<span class="t" style="left:2096.26px;top:183.95px;font:normal 400 21.2px/25px 'Liberation Sans';color:#787878;transform:scaleX(1.0376);">Delete</span>
<span class="t" style="left:2096.27px;top:229.85px;font:normal 400 21.2px/25px 'Liberation Sans';color:#000;transform:scaleX(1.0345);">Format</span>
<span class="t" style="left:2324.40px;top:211.85px;font:normal 400 21.2px/25px 'Liberation Sans';color:#787878;transform:scaleX(1.0656);">Sort &amp;</span>
<span class="t" style="left:2329.92px;top:235.85px;font:normal 400 21.2px/25px 'Liberation Sans';color:#787878;transform:scaleX(1.0776);">Filter</span>
<span class="t" style="left:64.50px;top:284.68px;font:normal 700 24px/29px 'Liberation Sans';color:#000;transform:scaleX(0.9815);">Office Update</span>
<span class="t" style="left:234.50px;top:284.68px;font:normal 400 24px/29px 'Liberation Sans';color:#000;transform:scaleX(1.0179);">To keep up-to-date with security updates, fixes, and improvements, choose Check for Updates.</span>
<div style="left:2294px;top:279px;width:250px;height:36px;background:#fff;border:2px solid #c3c0b8;border-radius:6px;"></div>
<span class="t" style="left:2313.34px;top:284.78px;font:normal 400 24px/29px 'Liberation Sans';color:#000;transform:scaleX(1.0619);">Check for Updates</span>
<span class="t" style="left:19.80px;top:345.53px;font:normal 400 23px/28px 'Liberation Sans';color:#000;transform:scaleX(1.0534);">A1</span>
<span class="t" style="left:810.20px;top:445.00px;font:normal 700 24px/29px 'Liberation Serif';color:#fc0d1b;transform:scaleX(0.9596);">H-5</span>
<span class="t" style="left:810.20px;top:478.90px;font:normal 700 24px/29px 'Liberation Serif';color:#fc0d1b;transform:scaleX(0.9921);">PBC</span>
<span class="t" style="left:50.60px;top:513.68px;font:normal 400 16.8px/20px 'Liberation Sans';color:#000;transform:scaleX(1.0406);">As per leadsheet</span>
<span class="t" style="left:50.60px;top:541.78px;font:normal 400 16.8px/20px 'Liberation Sans';color:#000;transform:scaleX(1.0338);">As per details</span>
<span class="t" style="left:49.73px;top:569.58px;font:normal 400 16.8px/20px 'Liberation Sans';color:#000;transform:scaleX(1.0742);">Difference</span>
<span class="t" style="left:389.34px;top:513.68px;font:normal 400 16.8px/20px 'Liberation Sans';color:#000;transform:scaleX(1.0649);">179,095,967.52</span>
<span class="t" style="left:389.34px;top:541.78px;font:normal 400 16.8px/20px 'Liberation Sans';color:#000;transform:scaleX(1.0649);">179,095,967.52</span>
<span class="t" style="left:488.30px;top:569.58px;font:normal 400 16.8px/20px 'Liberation Sans';color:#000;transform:scaleX(1.0800);">-</span>
<span class="t" style="left:103.94px;top:626.12px;font:normal 700 18.7px/22px 'Liberation Sans';color:#1f497d;transform:scaleX(1.0560);">Date</span>
<span class="t" style="left:235.69px;top:626.12px;font:normal 700 18.7px/22px 'Liberation Sans';color:#1f497d;transform:scaleX(1.0066);">PO No.</span>
<span class="t" style="left:385.54px;top:626.12px;font:normal 700 18.7px/22px 'Liberation Sans';color:#1f497d;transform:scaleX(1.0565);">Invoice No.</span>
<span class="t" style="left:572.20px;top:626.12px;font:normal 700 18.7px/22px 'Liberation Sans';color:#1f497d;transform:scaleX(1.0646);">Amount</span>
<span class="t" style="left:106.30px;top:657.58px;font:normal 400 16.8px/20px 'Liberation Sans';color:#000;transform:scaleX(1.0464);">9-Feb-17</span>
<span class="t" style="left:242.50px;top:657.58px;font:normal 400 16.8px/20px 'Liberation Sans';color:#000;transform:scaleX(1.0468);">38103</span>
<span class="t" style="left:414.70px;top:657.58px;font:normal 400 16.8px/20px 'Liberation Sans';color:#000;transform:scaleX(1.0446);">52421</span>
<span class="t" style="left:576.70px;top:657.58px;font:normal 400 16.8px/20px 'Liberation Sans';color:#000;transform:scaleX(1.0525);">24,846,742.48</span>
<span class="t" style="left:91.49px;top:685.68px;font:normal 400 16.8px/20px 'Liberation Sans';color:#000;transform:scaleX(1.1121);">15-Mar-17</span>
<span class="t" style="left:242.50px;top:685.68px;font:normal 400 16.8px/20px 'Liberation Sans';color:#000;transform:scaleX(1.0757);">71122</span>
<span class="t" style="left:414.70px;top:685.68px;font:normal 400 16.8px/20px 'Liberation Sans';color:#000;transform:scaleX(1.0446);">39653</span>
<span class="t" style="left:576.70px;top:685.68px;font:normal 400 16.8px/20px 'Liberation Sans';color:#000;transform:scaleX(1.0525);">22,015,856.90</span>
<span class="t" style="left:87.48px;top:713.78px;font:normal 400 16.8px/20px 'Liberation Sans';color:#000;transform:scaleX(1.1233);">18-May-17</span>
<span class="t" style="left:242.50px;top:713.78px;font:normal 400 16.8px/20px 'Liberation Sans';color:#000;transform:scaleX(1.0468);">54149</span>
<span class="t" style="left:414.70px;top:713.78px;font:normal 400 16.8px/20px 'Liberation Sans';color:#000;transform:scaleX(1.0446);">56378</span>
<span class="t" style="left:576.70px;top:713.78px;font:normal 400 16.8px/20px 'Liberation Sans';color:#000;transform:scaleX(1.0525);">20,246,528.26</span>
<span class="t" style="left:116.20px;top:741.88px;font:normal 400 16.8px/20px 'Liberation Sans';color:#000;transform:scaleX(1.0117);">2-Jul-17</span>
<span class="t" style="left:242.50px;top:741.88px;font:normal 400 16.8px/20px 'Liberation Sans';color:#000;transform:scaleX(1.0468);">99487</span>
<span class="t" style="left:414.70px;top:741.88px;font:normal 400 16.8px/20px 'Liberation Sans';color:#000;transform:scaleX(1.0446);">62758</span>
<span class="t" style="left:576.70px;top:741.88px;font:normal 400 16.8px/20px 'Liberation Sans';color:#000;transform:scaleX(1.0525);">30,862,447.31</span>
<span class="t" style="left:93.33px;top:769.98px;font:normal 400 16.8px/20px 'Liberation Sans';color:#000;transform:scaleX(1.0748);">13-Aug-17</span>
<span class="t" style="left:242.50px;top:769.98px;font:normal 400 16.8px/20px 'Liberation Sans';color:#000;transform:scaleX(1.0468);">89573</span>
<span class="t" style="left:414.70px;top:769.98px;font:normal 400 16.8px/20px 'Liberation Sans';color:#000;transform:scaleX(1.0446);">46585</span>
<span class="t" style="left:576.70px;top:769.98px;font:normal 400 16.8px/20px 'Liberation Sans';color:#000;transform:scaleX(1.0525);">41,478,351.70</span>
<span class="t" style="left:106.30px;top:798.08px;font:normal 400 16.8px/20px 'Liberation Sans';color:#000;transform:scaleX(1.0323);">2-Dec-17</span>
<span class="t" style="left:242.50px;top:798.08px;font:normal 400 16.8px/20px 'Liberation Sans';color:#000;transform:scaleX(1.0468);">74231</span>
<span class="t" style="left:414.70px;top:798.08px;font:normal 400 16.8px/20px 'Liberation Sans';color:#000;transform:scaleX(1.0446);">30683</span>
<span class="t" style="left:576.70px;top:798.08px;font:normal 400 16.8px/20px 'Liberation Sans';color:#000;transform:scaleX(1.0649);">31,211,151.78</span>
<span class="t" style="left:96.20px;top:826.18px;font:normal 400 16.8px/20px 'Liberation Sans';color:#000;transform:scaleX(1.0382);">26-Dec-17</span>
<span class="t" style="left:242.50px;top:826.18px;font:normal 400 16.8px/20px 'Liberation Sans';color:#000;transform:scaleX(1.0468);">33122</span>
<span class="t" style="left:414.70px;top:826.18px;font:normal 400 16.8px/20px 'Liberation Sans';color:#000;transform:scaleX(1.0446);">23379</span>
<span class="t" style="left:586.30px;top:826.18px;font:normal 400 16.8px/20px 'Liberation Sans';color:#000;transform:scaleX(1.0548);">8,434,889.09</span>
<span class="t" style="left:74.00px;top:853.39px;font:normal 700 18.8px/23px 'Liberation Sans';color:#000;transform:scaleX(1.0580);">Total</span>
<span class="t" style="left:539.86px;top:853.39px;font:normal 700 18.8px/23px 'Liberation Sans';color:#000;transform:scaleX(1.1432);">179,095,967.52</span>
<span class="t" style="left:71.60px;top:904.78px;font:normal 400 22px/26px 'Liberation Serif';color:#000;">Per auditor review of the legal contract between Apollo and their supplier, Anglonesia</span>
<span class="t" style="left:71.60px;top:930.98px;font:normal 400 22px/26px 'Liberation Serif';color:#000;">Rehabilitation and Reprogramming Institute, all freight, customs, taxes and tarrifs are</span>
<span class="t" style="left:71.60px;top:957.28px;font:normal 400 22px/26px 'Liberation Serif';color:#000;">paid by the supplier.</span>
<div style="left:120px;top:1505px;width:2px;height:40px;background:#cecece;"></div>
<div style="left:520px;top:1505px;width:2px;height:40px;background:#cecece;"></div>
<div style="left:816px;top:1505px;width:2px;height:40px;background:#cecece;"></div>
<div style="left:1738px;top:1505px;width:2px;height:40px;background:#cecece;"></div>
<div style="left:2166px;top:1505px;width:2px;height:40px;background:#cecece;"></div>
<div style="left:2242px;top:1505px;width:2px;height:40px;background:#cecece;"></div>
<div style="left:1130px;top:1502px;width:352.5px;height:46px;background:#fff;border:2px solid #c6c6c6;border-top:none;border-bottom-color:#ababab;border-radius:0 0 6px 6px;box-shadow:0 2px 2px rgba(0,0,0,0.10);"></div>
<div style="left:1132px;top:1500px;width:348.5px;height:5px;background:#fff;"></div>
<span class="t" style="left:163.48px;top:1508.48px;font:normal 400 24px/29px 'Liberation Sans';color:#5e5e5e;transform:scaleX(1.0248);-webkit-text-stroke:0.3px;text-shadow:0 1px 0 rgba(255,255,255,0.7);">H-2.1 Thru H-2.7 Inv. Counts</span>
<span class="t" style="left:559.38px;top:1508.48px;font:normal 400 24px/29px 'Liberation Sans';color:#5e5e5e;transform:scaleX(1.0211);-webkit-text-stroke:0.3px;text-shadow:0 1px 0 rgba(255,255,255,0.7);">H-3 Inventory 12-31</span>
<span class="t" style="left:855.96px;top:1508.48px;font:normal 400 24px/29px 'Liberation Sans';color:#5e5e5e;transform:scaleX(1.0373);-webkit-text-stroke:0.3px;text-shadow:0 1px 0 rgba(255,255,255,0.7);">H-4 Inventory Counts</span>
<span class="t" style="left:1171.30px;top:1508.48px;font:normal 700 24px/29px 'Liberation Sans';color:#2a8553;">H-5 Purchase Summary</span>
<span class="t" style="left:1519.29px;top:1508.48px;font:normal 400 24px/29px 'Liberation Sans';color:#5e5e5e;transform:scaleX(1.0076);-webkit-text-stroke:0.3px;text-shadow:0 1px 0 rgba(255,255,255,0.7);">H-6 LCNRV Calc</span>
<span class="t" style="left:1782.86px;top:1508.48px;font:normal 400 24px/29px 'Liberation Sans';color:#5e5e5e;transform:scaleX(1.0417);-webkit-text-stroke:0.3px;text-shadow:0 1px 0 rgba(255,255,255,0.7);">H-7 Inventory Obs. Calculation</span>
<div style="left:160px;top:1508px;width:24px;height:34px;background:linear-gradient(90deg,rgba(241,241,241,0.75),rgba(241,241,241,0.35) 60%,rgba(241,241,241,0));"></div>
<span class="t" style="left:48.18px;top:1565.78px;font:normal 400 22px/26px 'Liberation Sans';color:#555;transform:scaleX(1.1179);">Enter</span>
<span class="t" style="left:2449.39px;top:1565.98px;font:normal 400 22px/26px 'Liberation Sans';color:#555;transform:scaleX(1.1059);">100%</span>
<svg class="ov" width="2560" height="1600" viewBox="0 0 2560 1600"><path d="M39.5 397 L39.5 425.5 L10 425.5 Z" fill="#dcdcdc"/>
<path d="M419.1 160.9 h11 l-5.5 7.5 z" fill="#5f5f5f"/>
<path d="M533.3 160.9 h11 l-5.5 7.5 z" fill="#5f5f5f"/>
<path d="M1629.4 161.2 h11 l-5.5 7.5 z" fill="#b9b9b9"/>
<path d="M409.2 221.4 h11 l-5.5 7.5 z" fill="#5f5f5f"/>
<path d="M497.5 221.4 h11 l-5.5 7.5 z" fill="#b9b9b9"/>
<path d="M581.3 221.4 h11 l-5.5 7.5 z" fill="#b9b9b9"/>
<path d="M661.3 221.4 h11 l-5.5 7.5 z" fill="#5f5f5f"/>
<path d="M1389.5 221.4 h11 l-5.5 7.5 z" fill="#5f5f5f"/>
<path d="M96.0 168.0 h10 l-5.0 7 z" fill="#5f5f5f"/>
<path d="M178.0 192.2 h10 l-5.0 7 z" fill="#5f5f5f"/>
<path d="M954.9 161.8 h9 l-4.5 6.5 z" fill="#b9b9b9"/>
<path d="M1279.3 221.2 h11 l-5.5 7.5 z" fill="#b9b9b9"/>
<path d="M1771.5 167.8 h11 l-5.5 7.5 z" fill="#b9b9b9"/>
<path d="M1887.5 167.8 h11 l-5.5 7.5 z" fill="#b9b9b9"/>
<path d="M1989.5 167.8 h11 l-5.5 7.5 z" fill="#b9b9b9"/>
<path d="M2167.5 145.8 h11 l-5.5 7.5 z" fill="#b9b9b9"/>
<path d="M2173.5 191.8 h11 l-5.5 7.5 z" fill="#b9b9b9"/>
<path d="M2173.5 237.9 h11 l-5.5 7.5 z" fill="#5f5f5f"/>
<path d="M2283.5 146.1 h11 l-5.5 7.5 z" fill="#5f5f5f"/>
<path d="M2277.5 191.8 h11 l-5.5 7.5 z" fill="#b9b9b9"/>
<path d="M2277.5 237.9 h11 l-5.5 7.5 z" fill="#5f5f5f"/>
<path d="M2386.0 168.3 h10 l-5.0 7 z" fill="#b9b9b9"/>
<path d="M217.8 34.9 h10.2 l-5.1 7.8 z" fill="#d6e6dd"/>
<path d="M2525.6 34.3 h10.5 l-5.2 8 z" fill="#d6e6dd"/>
<path d="M598.6 167 L605 160.8 L611.4 167 Z" fill="#3f86d6" stroke="#3f86d6" stroke-width="1.2" stroke-linejoin="round"/>
<path d="M654 164.2 L666.4 164.2 L660.2 170.4 Z" fill="#3f86d6" stroke="#3f86d6" stroke-width="1.2" stroke-linejoin="round"/>
<path d="M1489.6 216.6 C1497 217.6 1500.6 223 1500.2 228.2 C1499.8 233.6 1495.8 237.4 1489 237.6 L1487.8 235.2 C1491.6 234 1493.4 231.6 1493.2 228.4 C1493 224.4 1490.6 221 1487.6 218.6 Z" fill="#b3b3b3"/>
<rect x="48" y="23.6" width="31.8" height="28.4" rx="3.2" fill="#d9e7df"/>
<rect x="50.3" y="26" width="5.3" height="23.6" fill="#317d56"/>
<rect x="52" y="28.2" width="2" height="1.8" fill="#d9e7df"/>
<rect x="52" y="31.4" width="2" height="1.8" fill="#d9e7df"/>
<rect x="52" y="34.6" width="2" height="1.8" fill="#d9e7df"/>
<path d="M61.2 27.7 H69 L76 34.6 V46.4 Q76 47.9 74.5 47.9 H61.5 Q60 47.9 60 46.4 V28.9 Q60 27.7 61.2 27.7 Z" fill="#317d56"/>
<path d="M69.3 28 L69.3 33.2 Q69.3 34.4 70.5 34.4 L75.6 34.4" fill="none" stroke="#d9e7df" stroke-width="1.6"/>
<path d="M114.8 23.6 H137.2 Q140.2 23.6 140.2 26.6 V49 Q140.2 52 137.2 52 H116.5 L111.8 47.8 V26.6 Q111.8 23.6 114.8 23.6 Z" fill="#d9e7df"/>
<path d="M115.9 26.4 H136.1 V34.2 Q136.1 36.6 133.7 36.6 H118.3 Q115.9 36.6 115.9 34.2 Z" fill="#317d56"/>
<path d="M119.7 49.8 V44 Q119.7 42.5 121.2 42.5 H130.5 Q132 42.5 132 44 V49.8 H126 V45.7 H122 V49.8 Z" fill="#317d56"/>
<path d="M171.9 31.9 V48.1 H188.2 Z" fill="#d9e7df"/>
<path d="M181 39 L186.78 33.23 A7.6 7.6 0 0 1 197.84 43.64 L194.7 47.1" fill="none" stroke="#d9e7df" stroke-width="4.3" stroke-linecap="round" stroke-linejoin="round"/>
<path d="M262.4 33.3 A10.1 10.1 0 1 0 277.6 33.3" fill="none" stroke="#68a384" stroke-width="4" stroke-linecap="round"/>
<path d="M270.1 26.1 H282.1 L270.1 38 Z" fill="#68a384"/>
<rect x="323.9" y="30.2" width="16.3" height="1.8" fill="#d9e7df"/>
<path d="M323.9 35.9 H340.2 L332 44.8 Z" fill="#d9e7df"/>
<defs>
<linearGradient id="gBoard" x1="0" y1="0" x2="0" y2="1"><stop offset="0" stop-color="#e8bd7e"/><stop offset="1" stop-color="#d8a468"/></linearGradient>
<linearGradient id="gClip" x1="0" y1="0" x2="0" y2="1"><stop offset="0" stop-color="#858585"/><stop offset="1" stop-color="#666"/></linearGradient>
<linearGradient id="gFold" x1="0" y1="1" x2="1" y2="0"><stop offset="0" stop-color="#fff"/><stop offset="1" stop-color="#d8d8d8"/></linearGradient>
<linearGradient id="gBrushH" x1="0" y1="0" x2="0" y2="1"><stop offset="0" stop-color="#ffffff"/><stop offset="1" stop-color="#dcdcdc"/></linearGradient>
</defs>
<rect x="30.4" y="146.4" width="43.4" height="49.4" rx="3.4" fill="url(#gBoard)" stroke="#c99a5e" stroke-width="0.9"/>
<path d="M44.2 146.8 Q44.2 140 52 140 Q59.8 140 59.8 146.8 H62.7 Q65.7 146.8 65.7 150 V152.8 Q65.7 155.9 62.7 155.9 H41.3 Q38.3 155.9 38.3 152.8 V150 Q38.3 146.8 41.3 146.8 Z" fill="url(#gClip)"/>
<circle cx="52" cy="146" r="1.9" fill="#f3dcb8" stroke="#c99a5e" stroke-width="0.6"/>
<path d="M45.9 161.9 H63.8 L76.2 174.4 V198.1 H45.9 Z" fill="#fff" stroke="#8d8d8d" stroke-width="1"/>
<path d="M63.8 161.9 V174.4 H76.2 Z" fill="url(#gFold)" stroke="#a5a5a5" stroke-width="0.8" stroke-linejoin="round"/>
<path d="M138.2 134.4 Q137.4 139 141.5 143.5 L153.3 156 L156.2 153.4 Z" fill="#151515"/>
<path d="M157.8 134.4 Q158.6 139 154.5 143.5 L142.7 156 L139.8 153.4 Z" fill="#151515"/>
<circle cx="139.9" cy="159.9" r="4.7" fill="#f6f6f6" stroke="#2b7bd1" stroke-width="2.3"/>
<circle cx="156" cy="159.9" r="4.7" fill="#f6f6f6" stroke="#2b7bd1" stroke-width="2.3"/>
<rect x="135.7" y="189.6" width="16.8" height="20.8" rx="0.8" fill="#fff" stroke="#8d8d8d" stroke-width="1"/>
<path d="M143.7 181.6 H151.6 L160.4 190.4 V202 H143.7 Z" fill="#fff" stroke="#8d8d8d" stroke-width="1"/>
<path d="M151.6 181.6 V190.4 H160.4 Z" fill="url(#gFold)" stroke="#a5a5a5" stroke-width="0.8" stroke-linejoin="round"/>
<g transform="translate(151.8,239) rotate(-37)">
<rect x="4" y="-3.1" width="11" height="6.2" rx="3" fill="url(#gBrushH)" stroke="#dddddd" stroke-width="0.7"/>
<rect x="-4" y="-6.6" width="9" height="13.2" rx="1.2" fill="#f3f3f3" stroke="#dcdcdc" stroke-width="0.8"/>
<path d="M-4 -6.6 L-4 6.6 L-16 10.4 L-16.6 -9.4 Z" fill="#dfdad5"/>
<path d="M-8.5 8 L-16 10.4 L-16.6 -9.4 L-13.5 -8.5 Z" fill="#bbd2ec"/>
</g>
<g fill="#d2d2d2"><rect x="449.4" y="209.2" width="2" height="2"/><rect x="449.4" y="225.6" width="2" height="2"/><rect x="453.4" y="209.2" width="2" height="2"/><rect x="453.4" y="225.6" width="2" height="2"/><rect x="457.5" y="209.2" width="2" height="2"/><rect x="457.5" y="225.6" width="2" height="2"/><rect x="461.5" y="209.2" width="2" height="2"/><rect x="461.5" y="225.6" width="2" height="2"/><rect x="465.6" y="209.2" width="2" height="2"/><rect x="465.6" y="225.6" width="2" height="2"/><rect x="469.6" y="209.2" width="2" height="2"/><rect x="469.6" y="225.6" width="2" height="2"/><rect x="473.7" y="209.2" width="2" height="2"/><rect x="473.7" y="225.6" width="2" height="2"/><rect x="477.8" y="209.2" width="2" height="2"/><rect x="477.8" y="225.6" width="2" height="2"/><rect x="481.8" y="209.2" width="2" height="2"/><rect x="481.8" y="225.6" width="2" height="2"/><rect x="449.4" y="213.3" width="2" height="2"/><rect x="465.6" y="213.3" width="2" height="2"/><rect x="481.8" y="213.3" width="2" height="2"/><rect x="449.4" y="217.4" width="2" height="2"/><rect x="465.6" y="217.4" width="2" height="2"/><rect x="481.8" y="217.4" width="2" height="2"/><rect x="449.4" y="221.5" width="2" height="2"/><rect x="465.6" y="221.5" width="2" height="2"/><rect x="481.8" y="221.5" width="2" height="2"/><rect x="449.4" y="229.7" width="2" height="2"/><rect x="465.6" y="229.7" width="2" height="2"/><rect x="481.8" y="229.7" width="2" height="2"/><rect x="449.4" y="233.8" width="2" height="2"/><rect x="465.6" y="233.8" width="2" height="2"/><rect x="481.8" y="233.8" width="2" height="2"/><rect x="449.4" y="237.9" width="2" height="2"/><rect x="465.6" y="237.9" width="2" height="2"/><rect x="481.8" y="237.9" width="2" height="2"/></g>
<rect x="449.2" y="240.9" width="34.2" height="2.2" fill="#a3a3a3"/>
<g>
<path d="M546.6 211.2 L556.6 221.2 L546.2 231.6 L536.2 221.6 Z" fill="#fbfbfb" stroke="#b4b4b4" stroke-width="1.2" stroke-linejoin="round"/>
<path d="M542.6 215.6 L545 213.2 L554.6 222.8 L552.2 225.2 Z" fill="#bcd5f0"/>
<path d="M553 215.5 Q559.8 216 559.6 222 Q559.5 226.5 557.6 228.6 Q555.6 227.5 556.2 224 Q556.8 219.5 552.2 217.8 Z" fill="#a9c6ea"/>
<path d="M546.8 217 V209.3 Q546.8 207 548.9 207 Q551 207 551 209.3 V216.4" fill="none" stroke="#a9a9a9" stroke-width="1.4"/>
</g>
<rect x="732.1" y="153.2" width="23.8" height="2" fill="#b3b3b3"/>
<rect x="732.1" y="159.2" width="23.8" height="2" fill="#b3b3b3"/>
<rect x="790.0" y="162.0" width="23.8" height="2" fill="#b3b3b3"/>
<rect x="790.0" y="168.0" width="23.8" height="2" fill="#b3b3b3"/>
<rect x="848.0" y="170.0" width="23.9" height="2" fill="#b3b3b3"/>
<rect x="848.0" y="176.0" width="23.9" height="2" fill="#b3b3b3"/>
<rect x="730.1" y="216.0" width="25.8" height="2" fill="#b3b3b3"/>
<rect x="730.1" y="222.0" width="17.6" height="2" fill="#b3b3b3"/>
<rect x="730.1" y="228.0" width="29.8" height="2" fill="#b3b3b3"/>
<rect x="730.1" y="234.0" width="21.6" height="2" fill="#b3b3b3"/>
<rect x="790.0" y="216.0" width="23.8" height="2" fill="#b3b3b3"/>
<rect x="793.8" y="222.0" width="16.2" height="2" fill="#b3b3b3"/>
<rect x="788.0" y="228.0" width="27.8" height="2" fill="#b3b3b3"/>
<rect x="792.0" y="234.0" width="19.8" height="2" fill="#b3b3b3"/>
<rect x="848.1" y="216.0" width="25.8" height="2" fill="#b3b3b3"/>
<rect x="856.1" y="222.0" width="17.8" height="2" fill="#b3b3b3"/>
<rect x="844.1" y="228.0" width="29.8" height="2" fill="#b3b3b3"/>
<rect x="852.2" y="234.0" width="21.7" height="2" fill="#b3b3b3"/>
<path d="M910 226 L918.4 218 V221.4 H925 Q925.9 221.4 925.9 222.3 V229.7 Q925.9 230.6 925 230.6 H918.4 V234 Z" fill="#b3cfee"/>
<path d="M984 226 L975.6 218 V221.4 H969 Q968.1 221.4 968.1 222.3 V229.7 Q968.1 230.6 969 230.6 H975.6 V234 Z" fill="#b3cfee"/>
<rect x="924.1" y="216.0" width="19.7" height="2" fill="#b3b3b3"/>
<rect x="930.2" y="222.0" width="13.6" height="2" fill="#b3b3b3"/>
<rect x="930.2" y="228.0" width="13.6" height="2" fill="#b3b3b3"/>
<rect x="924.1" y="234.0" width="19.7" height="2" fill="#b3b3b3"/>
<rect x="982.2" y="216.0" width="19.7" height="2" fill="#b3b3b3"/>
<rect x="988.1" y="222.0" width="13.8" height="2" fill="#b3b3b3"/>
<rect x="988.1" y="228.0" width="13.8" height="2" fill="#b3b3b3"/>
<rect x="982.2" y="234.0" width="19.7" height="2" fill="#b3b3b3"/>
<text transform="translate(920.3,180.6) rotate(-46)" font-family="Liberation Sans" font-size="27" fill="#adadad" textLength="28.5" lengthAdjust="spacingAndGlyphs">ab</text>
<path d="M924.8 181.2 L940 166" stroke="#a9c9ec" stroke-width="1.8" stroke-linecap="round" fill="none"/>
<path d="M943.6 162.4 L943.2 170.6 L935.4 162.8 Z" fill="#a9c9ec"/>
<rect x="1061.3" y="155.1" width="19.4" height="23.4" rx="1.2" fill="#f8f8f8" stroke="#cdcdcd" stroke-width="1.1"/>
<rect x="1061.8" y="165.8" width="18.4" height="1" fill="#dcdcdc"/>
<rect x="1064.2" y="160.1" width="23.8" height="1.8" fill="#b4b4b4"/>
<rect x="1064.2" y="172.1" width="9.8" height="1.8" fill="#b4b4b4"/>
<path d="M1091.3 157.6 Q1100.6 159.6 1100.3 167 Q1100 174.6 1091.8 175.6 V180.2 L1084.4 172.8 L1091.8 165.6 V170.4 Q1095.3 169.6 1095.5 166 Q1095.8 161.8 1091.3 157.6 Z" fill="#b3cfee"/>
<rect x="1063.3" y="209.1" width="31.4" height="31.6" rx="1.2" fill="#f8f8f8" stroke="#c8c8c8" stroke-width="1.3"/>
<rect x="1063.8" y="215.8" width="30.4" height="1.1" fill="#d2d2d2"/>
<rect x="1063.8" y="232.8" width="30.4" height="1.1" fill="#d2d2d2"/>
<path d="M1079.5 209.6 V216.4 M1079.5 233.3 V240.2" stroke="#d2d2d2" stroke-width="1.1"/>
<path d="M1068.2 224.9 L1074 219.9 V223.9 H1084.1 V219.9 L1089.9 224.9 L1084.1 229.9 V225.9 H1074 V229.9 Z" fill="#b3cfee"/>
<path d="M1546 218.9 L1553.6 212.0 V215.5 H1561.2 Q1562 215.5 1562 216.3 V221.5 Q1562 222.3 1561.2 222.3 H1553.6 V225.8 Z" fill="#afcdf0"/>
<path d="M1619.9 234.9 L1612.3000000000002 228.0 V231.5 H1604.7 Q1603.9 231.5 1603.9 232.3 V237.5 Q1603.9 238.3 1604.7 238.3 H1612.3000000000002 V241.8 Z" fill="#afcdf0"/>
<defs>
<linearGradient id="gHandle" x1="0" y1="0" x2="1" y2="1"><stop offset="0" stop-color="#fdfdfd"/><stop offset="0.55" stop-color="#ececec"/><stop offset="1" stop-color="#cfcfcf"/></linearGradient>
<linearGradient id="gSigma" x1="0" y1="0" x2="0" y2="1"><stop offset="0" stop-color="#767676"/><stop offset="1" stop-color="#535353"/></linearGradient>
<linearGradient id="gFunnel" x1="0" y1="0" x2="1" y2="0"><stop offset="0" stop-color="#d9d9d9"/><stop offset="0.5" stop-color="#c6c6c6"/><stop offset="1" stop-color="#cdcdcd"/></linearGradient>
</defs>
<rect x="1705.5" y="147.2" width="51.4" height="47.2" rx="1" fill="#fafafa"/>
<rect x="1705.5" y="147.2" width="51.4" height="47.2" rx="1" fill="none" stroke="#c9c9c9" stroke-width="1.1"/>
<path d="M1718.3 147.2 V194.4 M1730.2 147.2 V194.4 M1743.4 147.2 V194.4 M1705.5 158.2 H1756.9 M1705.5 170 H1756.9 M1705.5 182.2 H1756.9 " stroke="#dedede" stroke-width="1" fill="none"/>
<rect x="1718.8" y="147.8" width="11.4" height="10.4" fill="#f2cfd2"/>
<rect x="1718.8" y="158.2" width="19.1" height="11.8" fill="#c6dcf3"/>
<rect x="1718.8" y="170" width="24.9" height="12.2" fill="#f2cfd2"/>
<rect x="1718.8" y="182.2" width="11.4" height="11.6" fill="#c6dcf3"/>
<rect x="1733.4" y="175.4" width="29.2" height="25.1" rx="1" fill="#f8f8f8" stroke="#cfcfcf" stroke-width="1.2"/>
<path d="M1740.1 185.1 H1755.6 M1740.1 190.8 H1755.6 M1743.7 195.6 L1752.3 180.3" stroke="#aeaeae" stroke-width="1.7" fill="none"/>
<rect x="1832.3" y="160.4" width="38.5" height="32.3" fill="#e9eef7"/>
<rect x="1819.3" y="149.3" width="51.5" height="43.4" rx="1" fill="none" stroke="#c9c9c9" stroke-width="1.3"/>
<path d="M1832.3 149.3 V192.7 M1844.2 149.3 V192.7 M1856.4 149.3 V192.7 M1819.3 160.4 H1870.8 M1819.3 170.3 H1870.8 M1819.3 180.5 H1870.8 " stroke="#dcdfe6" stroke-width="1" fill="none"/>
<rect x="1819.3" y="149.3" width="13" height="43.4" fill="#fafafa" opacity="0.0"/>
<g transform="translate(0,0)">
<path d="M1855.2 178.6 Q1866 164.5 1877.5 158.7 Q1881.5 157 1881.6 160.2 Q1881.4 164.8 1863.6 186.6 Z" fill="url(#gHandle)" stroke="#dadada" stroke-width="0.9"/>
<path d="M1846.3 193.6 Q1838.5 201.2 1831.6 199.6 Q1837.5 197.8 1842.6 186.9 Z" fill="#b5d0f0"/>
<path d="M1831.6 199.6 Q1838 202 1845 200.6 Q1851 199.5 1853.4 196.4 L1842.2 187.4 Q1838 197 1831.6 199.6 Z" fill="#b5d0f0"/>
<path d="M1842.6 187 Q1845.5 180.2 1852.8 179.6 Q1860.2 179.6 1860 186.8 Q1859.6 193.2 1853.6 197.2 Z" fill="#efdcc3" stroke="#dcc8a9" stroke-width="0.9"/>
</g>
<rect x="1930.5" y="158.2" width="32.9" height="25.3" fill="#e9eef7"/>
<rect x="1921.4" y="149.3" width="51.3" height="43.4" rx="1" fill="none" stroke="#c9c9c9" stroke-width="1.3"/>
<path d="M1930.5 149.3 V192.7 M1963.4 149.3 V192.7 M1921.4 158.2 H1972.7 M1921.4 183.5 H1972.7 " stroke="#dcdfe6" stroke-width="1" fill="none"/>
<g transform="translate(101.9,0)">
<path d="M1855.2 178.6 Q1866 164.5 1877.5 158.7 Q1881.5 157 1881.6 160.2 Q1881.4 164.8 1863.6 186.6 Z" fill="url(#gHandle)" stroke="#dadada" stroke-width="0.9"/>
<path d="M1846.3 193.6 Q1838.5 201.2 1831.6 199.6 Q1837.5 197.8 1842.6 186.9 Z" fill="#b5d0f0"/>
<path d="M1831.6 199.6 Q1838 202 1845 200.6 Q1851 199.5 1853.4 196.4 L1842.2 187.4 Q1838 197 1831.6 199.6 Z" fill="#b5d0f0"/>
<path d="M1842.6 187 Q1845.5 180.2 1852.8 179.6 Q1860.2 179.6 1860 186.8 Q1859.6 193.2 1853.6 197.2 Z" fill="#efdcc3" stroke="#dcc8a9" stroke-width="0.9"/>
</g>
<rect x="2063.4" y="135.4" width="19.4" height="7.2" rx="1" fill="#fafafa" stroke="#d2d2d2" stroke-width="1.1"/>
<path d="M2073.2 135.4 V142.6 " stroke="#dcdcdc" stroke-width="1" fill="none"/>
<rect x="2063.4" y="151.2" width="19.4" height="13.3" rx="1" fill="#fafafa" stroke="#d2d2d2" stroke-width="1.1"/>
<path d="M2073.2 151.2 V164.5 M2063.4 157.8 H2082.8 " stroke="#dcdcdc" stroke-width="1" fill="none"/>
<rect x="2066" y="142.2" width="21.8" height="9.4" rx="1.6" fill="#c6e1c2"/>
<path d="M2077.7 142.6 V151.2" stroke="#b6d6b2" stroke-width="1"/>
<path d="M2052 147 L2059.9 140 V144 H2063.2 Q2063.8 144 2063.8 144.6 V149.4 Q2063.8 150 2063.2 150 H2059.9 V154 Z" fill="#c6e1c2"/>
<rect x="2057.3" y="181.3" width="19.4" height="7.1" rx="1" fill="#fafafa" stroke="#d2d2d2" stroke-width="1.1"/>
<path d="M2066.6 181.3 V188.4 " stroke="#dcdcdc" stroke-width="1" fill="none"/>
<rect x="2057.3" y="197.4" width="19.4" height="13.1" rx="1" fill="#fafafa" stroke="#d2d2d2" stroke-width="1.1"/>
<path d="M2066.6 197.4 V210.5 M2057.3 203.8 H2076.7 " stroke="#dcdcdc" stroke-width="1" fill="none"/>
<rect x="2052" y="188.3" width="21.9" height="9.3" rx="1.6" fill="#f1c6c8"/>
<path d="M2062.9 188.6 V197.3" stroke="#e6b3b6" stroke-width="1"/>
<path d="M2079.2 189.1 L2086.9 196.8 M2086.9 189.1 L2079.2 196.8" stroke="#f0bfc2" stroke-width="3" fill="none"/>
<path d="M2055 224.1 V229.8 M2077 224.1 V229.8" stroke="#2f6db5" stroke-width="2"/>
<path d="M2057.9 226.9 L2061.8 223.6 V226 H2070 V223.6 L2073.9 226.9 L2070 230.2 V227.8 H2061.8 V230.2 Z" fill="#2f6db5"/>
<rect x="2053.6" y="255.8" width="32.8" height="2.2" rx="1" fill="#000" opacity="0.12"/>
<rect x="2053.1" y="233.2" width="33.8" height="23.4" rx="1.2" fill="#fff" stroke="#5a5a5a" stroke-width="1.1"/>
<path d="M2060.5 234 V256 M2071.6 234 V256 M2079.5 234 V256 M2054 239.1 H2086 M2054 250.6 H2086" stroke="#dcdcdc" stroke-width="1" fill="none"/>
<rect x="2060.5" y="239.1" width="11.1" height="11.5" fill="#4b88d1"/>
<path d="M2241.8 134 H2265.9 V142.6 H2264 L2262.7 137.9 H2250.7 L2260.5 148.8 L2249.6 160.8 H2263.6 L2265.7 156.2 H2268.2 V166.1 H2241.8 V163 L2253.2 149.9 L2241.8 136.9 Z" fill="url(#gSigma)"/>
<rect x="2241.6" y="209.6" width="24.6" height="2" fill="#000" opacity="0.07"/>
<rect x="2241.2" y="181.2" width="25.5" height="29.4" rx="1" fill="#fbfbfb" stroke="#cfcfcf" stroke-width="1.1"/>
<rect x="2241.8" y="181.8" width="24.3" height="5.8" fill="#e1e1e1"/>
<path d="M2249.8 193.2 Q2249.8 192.3 2250.7 192.3 H2257.1 Q2258 192.3 2258 193.2 V198.5 H2262 L2254 206.9 L2246 198.5 H2249.8 Z" fill="#b5cfee"/>
<path d="M2238.7 248.4 L2244.1 241.9 L2259.6 226.2 L2269.8 233.6 L2266.7 242.3 L2248.2 257 Z" fill="#b3405f" stroke="#b94a68" stroke-width="1.2" stroke-linejoin="round"/>
<path d="M2244.1 241.9 L2259.6 226.2 L2269.8 233.6 L2252 247.8 Z" fill="#e192a8"/>
<path d="M2238.7 248.4 L2244.1 241.9 L2252 247.8 L2248.2 257 Z" fill="#f0bfcb"/>
<path d="M2245 241.6 L2259.7 227.2 L2268.4 233.5" stroke="#eeb2c2" stroke-width="1.2" fill="none" stroke-linejoin="round"/>
<path d="M2344.4 160.5 L2358 178 V189.6 Q2358 191.8 2361.9 191.8 Q2365.8 191.8 2365.8 189.6 V178 L2379.4 160.5 Z" fill="url(#gFunnel)"/>
<ellipse cx="2361.9" cy="159.5" rx="17.3" ry="4.6" fill="#e7e7e7" stroke="#c6c6c6" stroke-width="1.5"/>
<path d="M1063.9 23.9 H1078.8 L1086 31.2 V52 H1063.9 Z" fill="#fff"/>
<path d="M1078.8 23.9 V31.2 H1086 Z" fill="#f4f4f4"/>
<path d="M1078.6 25 V31.4 H1085.6" stroke="#cfcfcf" stroke-width="0.8" fill="none"/>
<rect x="1066.2" y="26.2" width="5.6" height="3.4" fill="#c9c9c9"/><rect x="1073.1" y="26.2" width="4.8" height="3.4" fill="#c9c9c9"/>
<g fill="#b5d8b6"><rect x="1073.1" y="31.2" width="4.8" height="2.5"/><rect x="1079.1" y="31.2" width="4.8" height="2.5"/><rect x="1073.1" y="35.2" width="4.8" height="2.5"/><rect x="1079.1" y="35.2" width="4.8" height="2.5"/><rect x="1073.1" y="39.3" width="4.8" height="2.5"/><rect x="1079.1" y="39.3" width="4.8" height="2.5"/><rect x="1073.1" y="43.3" width="4.8" height="2.5"/><rect x="1079.1" y="43.3" width="4.8" height="2.5"/><rect x="1073.1" y="47.2" width="4.8" height="2.5"/><rect x="1079.1" y="47.2" width="4.8" height="2.5"/></g>
<path d="M1059.1 32.3 L1071.8 30.2 V49 L1059.1 46.7 Z" fill="#73aa8b"/>
<path d="M1062.2 35.6 L1068 43.6 M1068 35.6 L1062.2 43.6" stroke="#fff" stroke-width="1.7" fill="none"/>
<circle cx="2115" cy="35" r="7.85" fill="none" stroke="#fff" stroke-width="2.3"/>
<path d="M2120.9 40.9 L2127.8 47.8" stroke="#fff" stroke-width="2.3" stroke-linecap="butt"/>
<path d="M2131.3 35.7 L2136 40.1 L2140.6 35.7" stroke="#fff" stroke-width="2.2" fill="none" stroke-linecap="round" stroke-linejoin="round"/>
<circle cx="2502" cy="38.1" r="14.7" fill="none" stroke="#d9e7df" stroke-width="2.9"/>
<rect x="2496.4" y="30.2" width="3.3" height="6.7" rx="1.6" fill="#d9e7df"/><rect x="2504.2" y="30.2" width="3.3" height="6.7" rx="1.6" fill="#d9e7df"/>
<path d="M2493.2 41.4 Q2502 52 2510.8 41.4" fill="none" stroke="#d9e7df" stroke-width="2.4" stroke-linecap="round"/>
<ellipse cx="2380" cy="95" rx="5" ry="6" fill="#d9e7df"/>
<path d="M2369.9 112.9 V108.5 Q2369.9 103.6 2376 102.6 Q2380 105.8 2384 102.6 Q2389.9 103.6 2389.9 108.5 V112.9 Z" fill="#d9e7df"/>
<rect x="2388.1" y="96.8" width="15.9" height="4.5" fill="#d9e7df"/><rect x="2393.7" y="91.4" width="4.5" height="15.5" fill="#d9e7df"/>
<path d="M2507.8 105.8 L2516 97.2 L2524.4 105.8" fill="none" stroke="#d9e7df" stroke-width="4" stroke-linecap="round" stroke-linejoin="round"/>
<defs><radialGradient id="gClose" cx="0.5" cy="0.45" r="0.6"><stop offset="0" stop-color="#baa27f"/><stop offset="1" stop-color="#a78f6d"/></radialGradient></defs>
<circle cx="32" cy="297" r="13.9" fill="url(#gClose)"/>
<path d="M26 291 L38 303 M38 291 L26 303" stroke="#fdf7ea" stroke-width="3.6" fill="none"/>
<path d="M146 349.6 L153 339.7 L160 349.6 Z" fill="#6e6e6e"/><path d="M146 362 L160 362 L153 372.4 Z" fill="#6e6e6e"/>
<path d="M201 348 L219 366 M219 348 L201 366" stroke="#e04f5b" stroke-width="4.6" fill="none" stroke-linecap="round"/>
<path d="M258.2 357.3 L265.8 365.2 L281.8 348.3" stroke="#6dbf5e" stroke-width="4.8" fill="none" stroke-linecap="round" stroke-linejoin="round"/>
<path d="M2538 351 H2552 L2545 361.8 Z" fill="#6b6b6b"/>
<path d="M44.3 1519 V1538.8 L29.8 1528.9 Z" fill="#6a6a6a" stroke="#6a6a6a" stroke-width="1" stroke-linejoin="round"/>
<path d="M75.9 1519 V1538.8 L90 1528.9 Z" fill="#8d8d8d" stroke="#8d8d8d" stroke-width="1" stroke-linejoin="round"/>
<path d="M2196 1526.8 H2215.9 M2206 1517 V1536.6" stroke="#5a5a5a" stroke-width="4" fill="none"/>
<rect x="1949.2" y="1565.2" width="24" height="23" rx="1.5" fill="none" stroke="#6a6a6a" stroke-width="1.9"/>
<path d="M1957.2 1565.2 V1588.2 M1965.2 1565.2 V1588.2 M1949.2 1573 H1973.2 M1949.2 1580.6 H1973.2" stroke="#6a6a6a" stroke-width="1.7" fill="none"/>
<rect x="2020.4" y="1565.2" width="25.5" height="23" rx="1.5" fill="none" stroke="#6a6a6a" stroke-width="1.9"/>
<rect x="2026.3" y="1570.3" width="13.6" height="13" fill="none" stroke="#6a6a6a" stroke-width="1.7"/>
<path d="M2029 1574.4 H2037.2 M2029 1577 H2037.2 M2029 1579.6 H2037.2" stroke="#6a6a6a" stroke-width="1.3" fill="none"/>
<rect x="2091" y="1565.2" width="26" height="23" rx="1.5" fill="none" stroke="#6a6a6a" stroke-width="1.9"/>
<path d="M2091 1578.6 H2107.8 V1565.2 M2099.3 1565.2 V1578.6" stroke="#6a6a6a" stroke-width="1.8" fill="none"/>
<rect x="2155.9" y="1575" width="16.2" height="3.8" fill="#666"/>
<rect x="2188" y="1573.4" width="196" height="8.2" rx="4.1" fill="#9b9b9b"/>
<circle cx="2286" cy="1577" r="10.8" fill="#fff" stroke="#bdbdbd" stroke-width="1"/>
<path d="M2400 1577 H2415.8 M2407.9 1569 V1585" stroke="#666" stroke-width="3.8" fill="none"/></svg>
</div></body></html>
